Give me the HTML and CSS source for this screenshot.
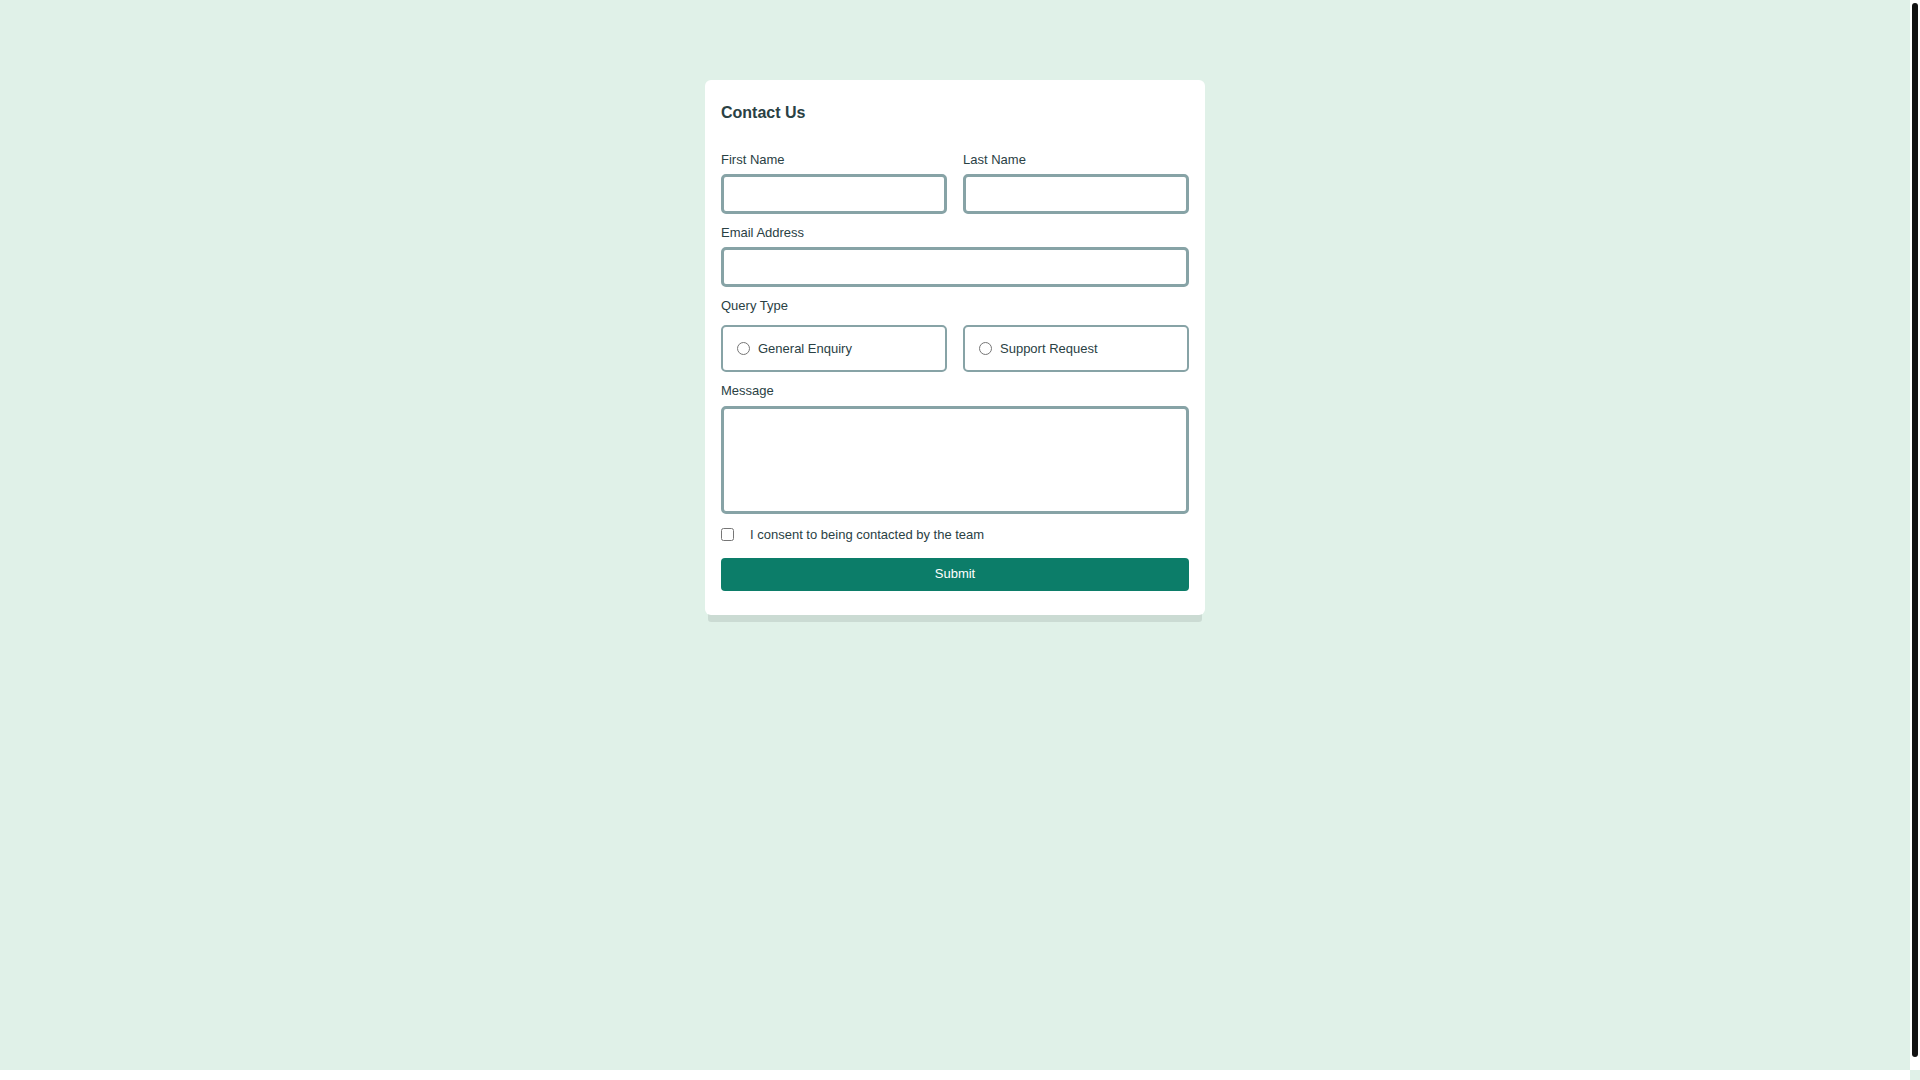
FILE: index.html
```html
<!DOCTYPE html>
<html lang="en">
<head>
<meta charset="utf-8">
<title>Contact Us</title>
<link rel="stylesheet" href="styles.css">
</head>
<body>
<main class="card">
  <h1 class="title">Contact Us</h1>
  <form class="form">
    <div class="row">
      <div class="field">
        <label class="label" for="fn">First Name</label>
        <input class="input" id="fn" type="text">
      </div>
      <div class="field">
        <label class="label" for="ln">Last Name</label>
        <input class="input" id="ln" type="text">
      </div>
    </div>
    <div class="field">
      <label class="label" for="em">Email Address</label>
      <input class="input" id="em" type="email">
    </div>
    <div class="field">
      <span class="label">Query Type</span>
      <div class="row radios">
        <label class="radio-box"><input class="radio" type="radio" name="q"><span>General Enquiry</span></label>
        <label class="radio-box"><input class="radio" type="radio" name="q"><span>Support Request</span></label>
      </div>
    </div>
    <div class="field">
      <label class="label" for="msg">Message</label>
      <textarea class="textarea" id="msg"></textarea>
    </div>
    <label class="consent"><input class="check" type="checkbox"><span>I consent to being contacted by the team</span></label>
    <button class="submit" type="button">Submit</button>
  </form>
</main>
<div class="vscroll" aria-hidden="true"><div class="vthumb"></div></div>
<div class="hscroll" aria-hidden="true"></div>
</body>
</html>
```
FILE: styles.css
```css
* {
  box-sizing: border-box;
}
body {
  margin: 0;
  min-height: 100vh;
  padding: 80px 10px 0 0;
  background: #e0f1e8;
  font-family: "Liberation Sans", Arial, sans-serif;
  color: #2a4144;
  display: flex;
  flex-direction: column;
  align-items: center;
  overflow: hidden;
}
.vscroll {
  position: fixed;
  top: 0;
  right: 0;
  width: 10px;
  height: calc(100vh - 10px);
  background: #ffffff;
  padding: 3px 2px 13px 2px;
}
.vthumb {
  width: 6px;
  height: 100%;
  background: #111111;
  border-radius: 3px;
}
.hscroll {
  position: fixed;
  left: 0;
  bottom: 0;
  width: calc(100vw - 10px);
  height: 10px;
  background: #ffffff;
}
.card {
  width: 500px;
  background: #ffffff;
  border-radius: 6px;
  padding: 24px 16px;
  box-shadow: 0 10px 0 -3px rgba(0, 0, 0, 0.09);
}
.title {
  margin: 0 0 30px;
  font-size: 16px;
  font-weight: 700;
  line-height: 18px;
}
.form {
  display: flex;
  flex-direction: column;
  gap: 11px;
}
.row {
  display: grid;
  grid-template-columns: 1fr 1fr;
  gap: 16px;
}
.field {
  display: flex;
  flex-direction: column;
  gap: 7px;
}
.label {
  font-size: 13px;
  line-height: 15px;
}
.input {
  height: 40px;
  border: 3px solid #87a3a6;
  border-radius: 5px;
  font-family: inherit;
  font-size: 13px;
  padding: 0 10px;
  outline: none;
}
.radios {
  margin-top: 5px;
}
.radio-box {
  height: 47px;
  border: 2px solid #87a3a6;
  border-radius: 5px;
  display: flex;
  align-items: center;
  padding-left: 14px;
  gap: 8px;
  font-size: 13px;
}
.radio {
  margin: 0;
  width: 13px;
  height: 13px;
}
.textarea {
  height: 108px;
  border: 3px solid #87a3a6;
  border-radius: 5px;
  resize: none;
  font-family: inherit;
  font-size: 13px;
  outline: none;
  margin-top: 1px;
}
.consent {
  display: flex;
  align-items: center;
  gap: 16px;
  font-size: 13px;
  line-height: 15px;
  margin-top: 2px;
}
.check {
  margin: 0;
  width: 13px;
  height: 13px;
}
.submit {
  margin-top: 5px;
  height: 33px;
  border: none;
  border-radius: 4px;
  background: #0c7d69;
  color: #ffffff;
  font-family: inherit;
  font-size: 13px;
  line-height: 15px;
  padding: 0 0 2px;
}
```
